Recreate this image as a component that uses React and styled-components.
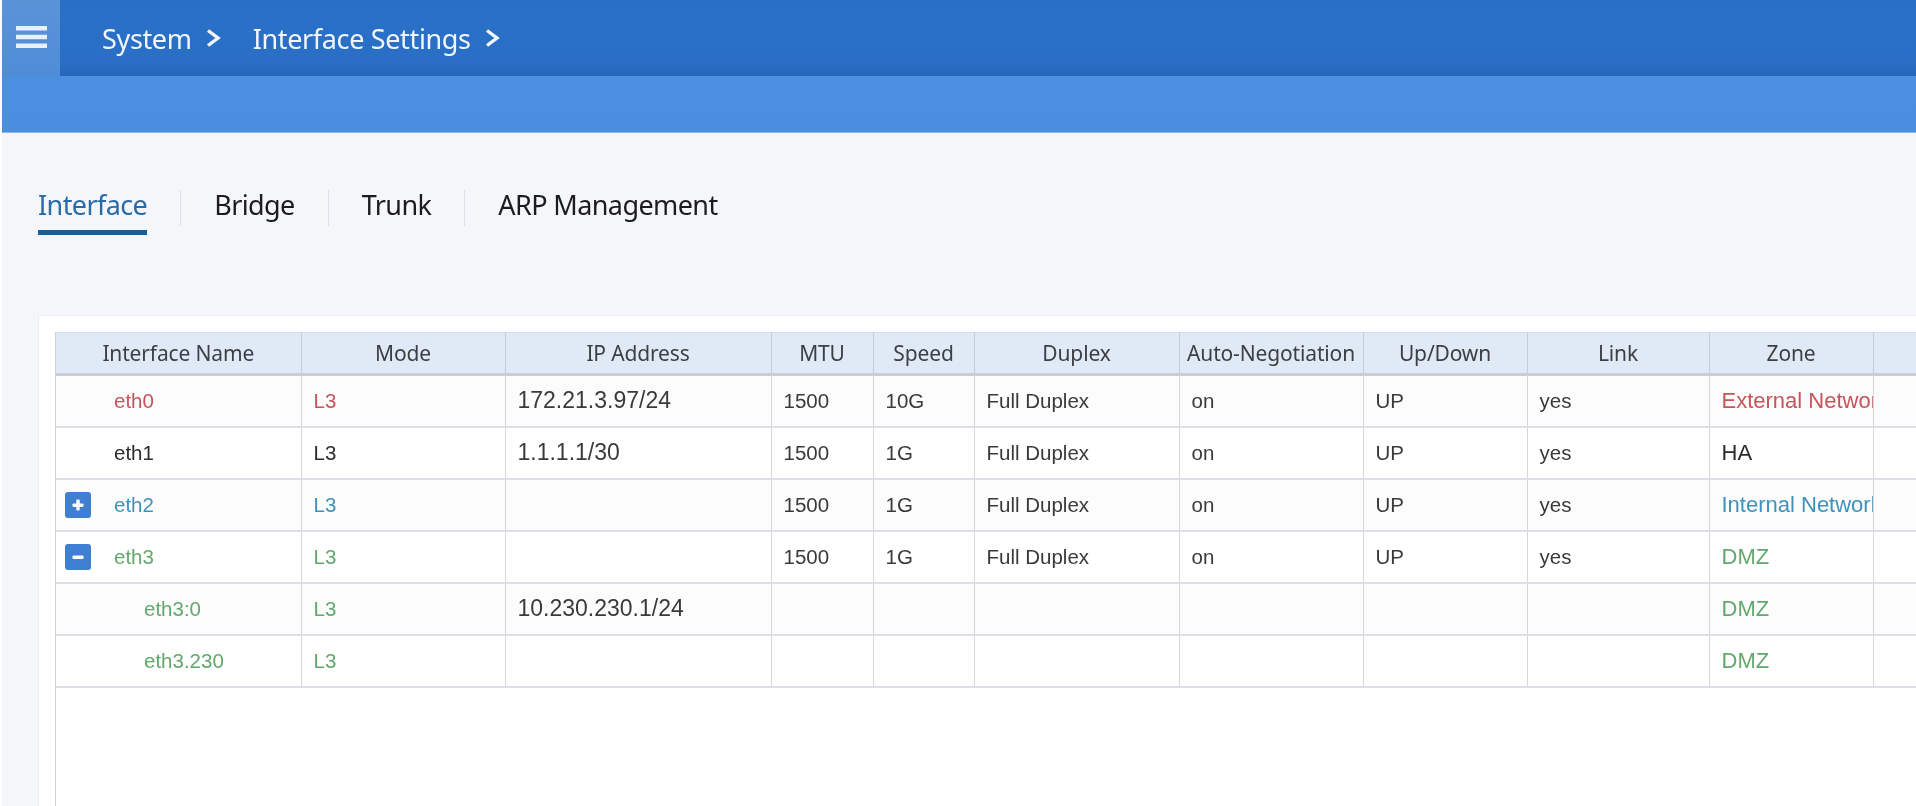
import React from 'react';
import styled, { createGlobalStyle } from 'styled-components';

const Global = createGlobalStyle`
  html, body { margin: 0; padding: 0; height: 100%; overflow: hidden; background: #fff; }
  #root { height: 100%; }
  * { box-sizing: border-box; }
`;

const Page = styled.div`
  height: 806px;
  overflow: hidden;
  padding-left: 2px;
  display: flex;
  flex-direction: column;
  background: #fff;
  font-family: "Noto Sans", "Liberation Sans", sans-serif;
  filter: blur(0.45px);
`;

const TopBar = styled.header`
  height: 76px;
  flex: none;
  display: flex;
  align-items: stretch;
  background: linear-gradient(180deg, #2870c6 0%, #2a6fc5 80%, #2567ba 100%);
`;

const MenuButton = styled.div`
  width: 58px;
  display: flex;
  align-items: center;
  justify-content: center;
  padding-bottom: 2px;
  background: linear-gradient(180deg, #5b93d8, #4f8cd8);
`;

const Crumbs = styled.nav`
  display: flex;
  align-items: center;
  padding-left: 42px;
  color: #f2f6fc;
  font-size: 27px;
  letter-spacing: -0.35px;
`;

const Crumb = styled.span`
  display: flex;
  align-items: center;
  gap: 14px;
  margin-right: 32px;
`;

const SubBar = styled.div`
  height: 57px;
  flex: none;
  background: linear-gradient(180deg, #4c90e2, #4a8edf);
  border-bottom: 1px solid #8db4e2;
`;

const Content = styled.main`
  flex: 1;
  min-height: 0;
  background: #f4f6fa;
  display: flex;
  flex-direction: column;
  padding: 56px 0 0 36px;
`;

const Tabs = styled.div`
  display: flex;
  align-items: center;
  height: 46px;
`;

const Tab = styled.div`
  height: 46px;
  display: flex;
  align-items: center;
  font-size: 27px;
  letter-spacing: -0.6px;
  color: ${p => (p.$active ? '#2b6aa8' : '#1c1c1c')};
  border-bottom: 5px solid ${p => (p.$active ? '#13609f' : 'transparent')};
  padding-bottom: 10px;
`;

const TabSep = styled.span`
  width: 1px;
  height: 36px;
  background: #dadfe6;
  margin: 1px 33px 0;
  align-self: flex-start;
`;

const Card = styled.section`
  flex: 1;
  min-height: 0;
  margin-top: 80px;
  background: #fff;
  border: 1px solid #e9edf3;
  border-right: none;
  border-bottom: none;
  padding: 16px 0 0 16px;
  overflow: hidden;
`;

const TableWrap = styled.div`
  height: 100%;
  width: 1900px;
  border-left: 1px solid #ccd0d6;
`;

const Table = styled.table`
  width: 1889px;
  table-layout: fixed;
  border-collapse: collapse;
`;

const Th = styled.th`
  height: 42px;
  padding: 0;
  background: #e0eaf6;
  border-right: 1px solid #c3ccd8;
  border-top: 1px solid #d6dfeb;
  border-bottom: 3px solid #c9ced6;
  font-family: "Noto Sans", sans-serif;
  font-weight: 400;
  font-size: 21px;
  letter-spacing: -0.15px;
  color: #3c3f44;
  white-space: nowrap;
  overflow: hidden;
  text-align: center;
`;

const Row = styled.tr`
  background: ${p => (p.$odd ? '#fcfcfc' : '#fff')};
`;

const Td = styled.td`
  height: 52px;
  padding: 0 0 0 12px;
  border-right: 1px solid #d3d7dc;
  border-bottom: 2px solid #dcdfe3;
  font-family: "Liberation Sans", Arial, sans-serif;
  font-size: ${p => p.$size || 20.5}px;
  color: ${p => p.$color || '#3a3a3a'};
  white-space: nowrap;
  overflow: hidden;
`;

const NameCell = styled.div`
  display: flex;
  align-items: center;
  padding-left: ${p => (p.$child ? 76 : 46)}px;
  position: relative;
`;

const Toggle = styled.span`
  position: absolute;
  left: -3px;
  top: 50%;
  transform: translateY(-50%);
  width: 26px;
  height: 26px;
  border-radius: 3px;
  background: #3f7fd2;
  display: flex;
  align-items: center;
  justify-content: center;
`;

const RED = '#c4555a';
const BLUE = '#3f92b8';
const GREEN = '#62a86c';
const BLACK = '#2c2c2c';

const widths = [245, 204, 266, 102, 101, 205, 184, 164, 182, 164, 72];
const headers = ['Interface Name', 'Mode', 'IP Address', 'MTU', 'Speed', 'Duplex', 'Auto-Negotiation', 'Up/Down', 'Link', 'Zone', ''];

const rows = [
  { name: 'eth0', color: RED, ip: '172.21.3.97/24', mtu: '1500', speed: '10G', up: true, zone: 'External Network' },
  { name: 'eth1', color: BLACK, ip: '1.1.1.1/30', mtu: '1500', speed: '1G', up: true, zone: 'HA' },
  { name: 'eth2', color: BLUE, toggle: 'plus', ip: '', mtu: '1500', speed: '1G', up: true, zone: 'Internal Network' },
  { name: 'eth3', color: GREEN, toggle: 'minus', ip: '', mtu: '1500', speed: '1G', up: true, zone: 'DMZ' },
  { name: 'eth3:0', color: GREEN, child: true, ip: '10.230.230.1/24', zone: 'DMZ' },
  { name: 'eth3.230', color: GREEN, child: true, ip: '', zone: 'DMZ' },
];

const Hamburger = () => (
  <svg width="31" height="22" viewBox="0 0 31 22" fill="#e9f0fa">
    <rect x="0" y="0" width="31" height="4.5" />
    <rect x="0" y="8.75" width="31" height="4.5" />
    <rect x="0" y="17.5" width="31" height="4.5" />
  </svg>
);

const Chevron = () => (
  <svg width="15" height="18" viewBox="0 0 15 18" fill="none" stroke="#f2f6fc" strokeWidth="3.4">
    <path d="M2 1.5 L12 9 L2 16.5" />
  </svg>
);

const ToggleIcon = ({ type }) => (
  <svg width="14" height="14" viewBox="0 0 14 14" fill="#fff">
    <rect x="1.5" y="5.5" width="11" height="3.4" rx="1" />
    {type === 'plus' && <rect x="5.3" y="1.5" width="3.4" height="11" rx="1" />}
  </svg>
);

export default function App() {
  return (
    <Page>
      <Global />
      <TopBar>
        <MenuButton><Hamburger /></MenuButton>
        <Crumbs>
          <Crumb>System <Chevron /></Crumb>
          <Crumb>Interface Settings <Chevron /></Crumb>
        </Crumbs>
      </TopBar>
      <SubBar />
      <Content>
        <Tabs>
          <Tab $active>Interface</Tab>
          <TabSep />
          <Tab>Bridge</Tab>
          <TabSep />
          <Tab>Trunk</Tab>
          <TabSep />
          <Tab>ARP Management</Tab>
        </Tabs>
        <Card>
          <TableWrap>
            <Table>
              <colgroup>
                {widths.map((w, i) => <col key={i} style={{ width: w }} />)}
              </colgroup>
              <thead>
                <tr>{headers.map((h, i) => <Th key={i}>{h}</Th>)}</tr>
              </thead>
              <tbody>
                {rows.map((r, i) => (
                  <Row key={r.name} $odd={i % 2 === 0}>
                    <Td $color={r.color}>
                      <NameCell $child={r.child}>
                        {r.toggle && <Toggle><ToggleIcon type={r.toggle} /></Toggle>}
                        {r.name}
                      </NameCell>
                    </Td>
                    <Td $color={r.color}>L3</Td>
                    <Td $size={23}>{r.ip}</Td>
                    <Td>{r.mtu}</Td>
                    <Td>{r.speed}</Td>
                    <Td>{r.up && 'Full Duplex'}</Td>
                    <Td>{r.up && 'on'}</Td>
                    <Td>{r.up && 'UP'}</Td>
                    <Td>{r.up && 'yes'}</Td>
                    <Td $color={r.color} $size={22}>{r.zone}</Td>
                    <Td />
                  </Row>
                ))}
              </tbody>
            </Table>
          </TableWrap>
        </Card>
      </Content>
    </Page>
  );
}
